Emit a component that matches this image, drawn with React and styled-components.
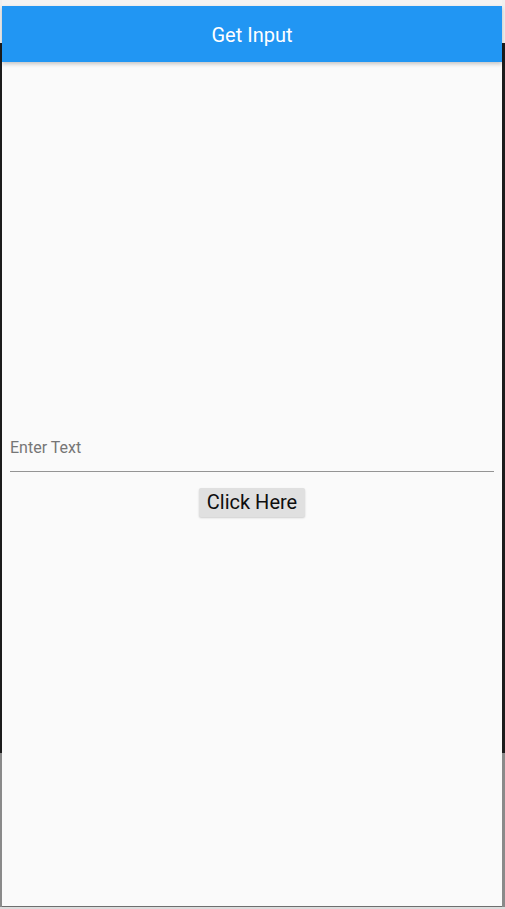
import React from "react";
import styled, { createGlobalStyle } from "styled-components";

const GlobalStyle = createGlobalStyle`
  html, body {
    margin: 0;
    padding: 0;
    height: 909px;
    overflow: hidden;
    background: linear-gradient(
      to bottom,
      #efefef 0px,
      #efefef 43px,
      #1c1c1c 43px,
      #1c1c1c 753px,
      #8a8a8a 753px,
      #8a8a8a 907px,
      #dcdcdc 907px
    );
    font-family: Roboto, "Noto Sans", sans-serif;
  }
`;

const Screen = styled.div`
  margin-left: 2px;
  width: 500px;
  height: 906px;
  background: #fafafa;
  display: flex;
  flex-direction: column;
  border-bottom: 1px solid #6e6e6e;
`;

const StatusStrip = styled.div`
  height: 6px;
  background: #f3f3f3;
`;

const AppBar = styled.header`
  height: 56px;
  box-sizing: border-box;
  padding-top: 2px;
  background: #2196f3;
  color: #fff;
  display: flex;
  align-items: center;
  justify-content: center;
  font-size: 20px;
  font-weight: 400;
  box-shadow: 0 2px 4px rgba(0, 0, 0, 0.22);
  position: relative;
  z-index: 1;
`;

const Body = styled.main`
  flex: 1;
  display: flex;
  flex-direction: column;
  justify-content: center;
  align-items: stretch;
  padding: 0 8px 27px 8px;
`;

const Field = styled.label`
  display: block;
  padding: 14px 0 14px 0;
  border-bottom: 1px solid #949494;
`;

const Placeholder = styled.span`
  display: block;
  font-size: 16px;
  line-height: 19px;
  color: #767676;
`;

const ButtonRow = styled.div`
  display: flex;
  justify-content: center;
  margin-top: 16px;
`;

const RaisedButton = styled.button`
  height: 29px;
  padding: 0 8px;
  border: none;
  border-radius: 2px;
  background: #e0e0e0;
  color: #0e0e0e;
  font-family: Roboto, "Noto Sans", sans-serif;
  font-size: 20px;
  line-height: 29px;
  box-shadow: 0 1px 2px rgba(0, 0, 0, 0.18);
  cursor: pointer;
`;

export default function App() {
  return (
    <>
      <GlobalStyle />
      <Screen>
        <StatusStrip />
        <AppBar>Get Input</AppBar>
        <Body>
          <Field>
            <Placeholder>Enter Text</Placeholder>
          </Field>
          <ButtonRow>
            <RaisedButton>Click Here</RaisedButton>
          </ButtonRow>
        </Body>
      </Screen>
    </>
  );
}
